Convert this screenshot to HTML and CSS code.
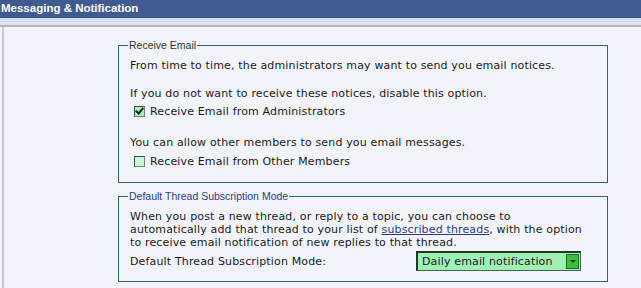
FILE: index.html
```html
<!DOCTYPE html>
<html lang="en">
<head>
  <meta charset="UTF-8">
  <title>Messaging &amp; Notification</title>
  <link rel="stylesheet" href="styles.css">
</head>
<body>
<div class="head">Messaging &amp; Notification</div>
<div class="strip"></div>

<div class="panel">
  <fieldset class="group">
    <legend>Receive Email</legend>
    <p class="note first">From time to time, the administrators may want to send you email notices.</p>
    <p class="note">If you do not want to receive these notices, disable this option.</p>
    <label class="check"><span class="box on"></span>Receive Email from Administrators</label>
    <p class="note gap">You can allow other members to send you email messages.</p>
    <label class="check"><span class="box"></span>Receive Email from Other Members</label>
  </fieldset>

  <fieldset class="group mode">
    <legend>Default Thread Subscription Mode</legend>
    <p class="para">When you post a new thread, or reply to a topic, you can choose to<br>
      automatically add that thread to your list of <a href="#">subscribed threads</a>, with the option<br>
      to receive email notification of new replies to that thread.</p>
    <div class="row">
      <span>Default Thread Subscription Mode:</span>
      <div class="select">
        <span class="value">Daily email notification</span>
        <span class="arrow"></span>
      </div>
    </div>
  </fieldset>
</div>
</body>
</html>
```

FILE: styles.css
```css
body {
  margin: 0;
  font-family: "DejaVu Sans", Verdana, sans-serif;
  font-size: 11px;
  line-height: 13px;
  letter-spacing: 0.15px;
  color: #1a1a1a;
  background: #f3f3fb;
  overflow: hidden;
}

.head {
  height: 17px;
  line-height: 17px;
  background: #3f5b8f;
  border-bottom: 1px solid #34507f;
  color: #ffffff;
  font-family: "Liberation Sans", Arial, sans-serif;
  font-weight: bold;
  font-size: 11.5px;
  letter-spacing: 0;
  padding-left: 1px;
}

.strip {
  height: 7px;
  background: #d9e0f2;
  border-bottom: 2px solid #b3b3bb;
}

.panel {
  border-left: 2px solid #c8c8cc;
  margin-left: 2px;
  height: 262px;
  padding-top: 12px;
}

.group {
  width: 466px;
  margin: 0 0 7px 114px;
  padding: 2px 11px 14px 11px;
  border: 1px solid #2f6a52;
  background: #f3f4fb;
}

.group legend {
  font-family: "Liberation Sans", Arial, sans-serif;
  font-size: 10.5px;
  line-height: 12px;
  letter-spacing: 0;
  color: #1f3b35;
  padding: 0 1px;
  margin-left: -2px;
}

.mode {
  padding-bottom: 10px;
}

.mode legend {
  color: #2a3c80;
}

.note {
  margin: 0 0 5px;
}

.note.first {
  margin-top: 6px;
  margin-bottom: 15px;
}

.note.gap {
  margin-top: 18px;
  margin-bottom: 6px;
}

.check {
  display: flex;
  align-items: center;
  gap: 5px;
  height: 13px;
  margin-left: 4px;
}

.box {
  width: 9px;
  height: 9px;
  border: 1px solid #2e5a3a;
  border-right-color: #6c8a70;
  border-bottom-color: #6c8a70;
  background: #c9f5d9;
  position: relative;
}

.box.on {
  background: #aaf0c2;
}

.box.on::after {
  content: "";
  position: absolute;
  left: 2px;
  top: -1px;
  width: 3px;
  height: 6px;
  border: solid #0d2b10;
  border-width: 0 2px 2px 0;
  transform: rotate(40deg);
}

.para {
  margin: 6px 0 2px;
}

.para a {
  color: #2a3c80;
}

.row {
  display: flex;
  align-items: center;
  justify-content: space-between;
  padding-right: 15px;
}

.select {
  width: 162px;
  height: 17px;
  display: flex;
  align-items: center;
  justify-content: space-between;
  background: #9ff0b4;
  border: 1px solid #3b6a48;
  border-left: 2px solid #1e3a26;
  border-top: 2px solid #1e3a26;
}

.value {
  padding-left: 4px;
}

.arrow {
  width: 11px;
  height: 13px;
  margin-right: 1px;
  background: #3dbd3d;
  border: 1px solid #1f6b1f;
  position: relative;
}

.arrow::after {
  content: "";
  position: absolute;
  left: 3px;
  top: 5px;
  border: 3px solid transparent;
  border-top: 3px solid #123812;
}
```
